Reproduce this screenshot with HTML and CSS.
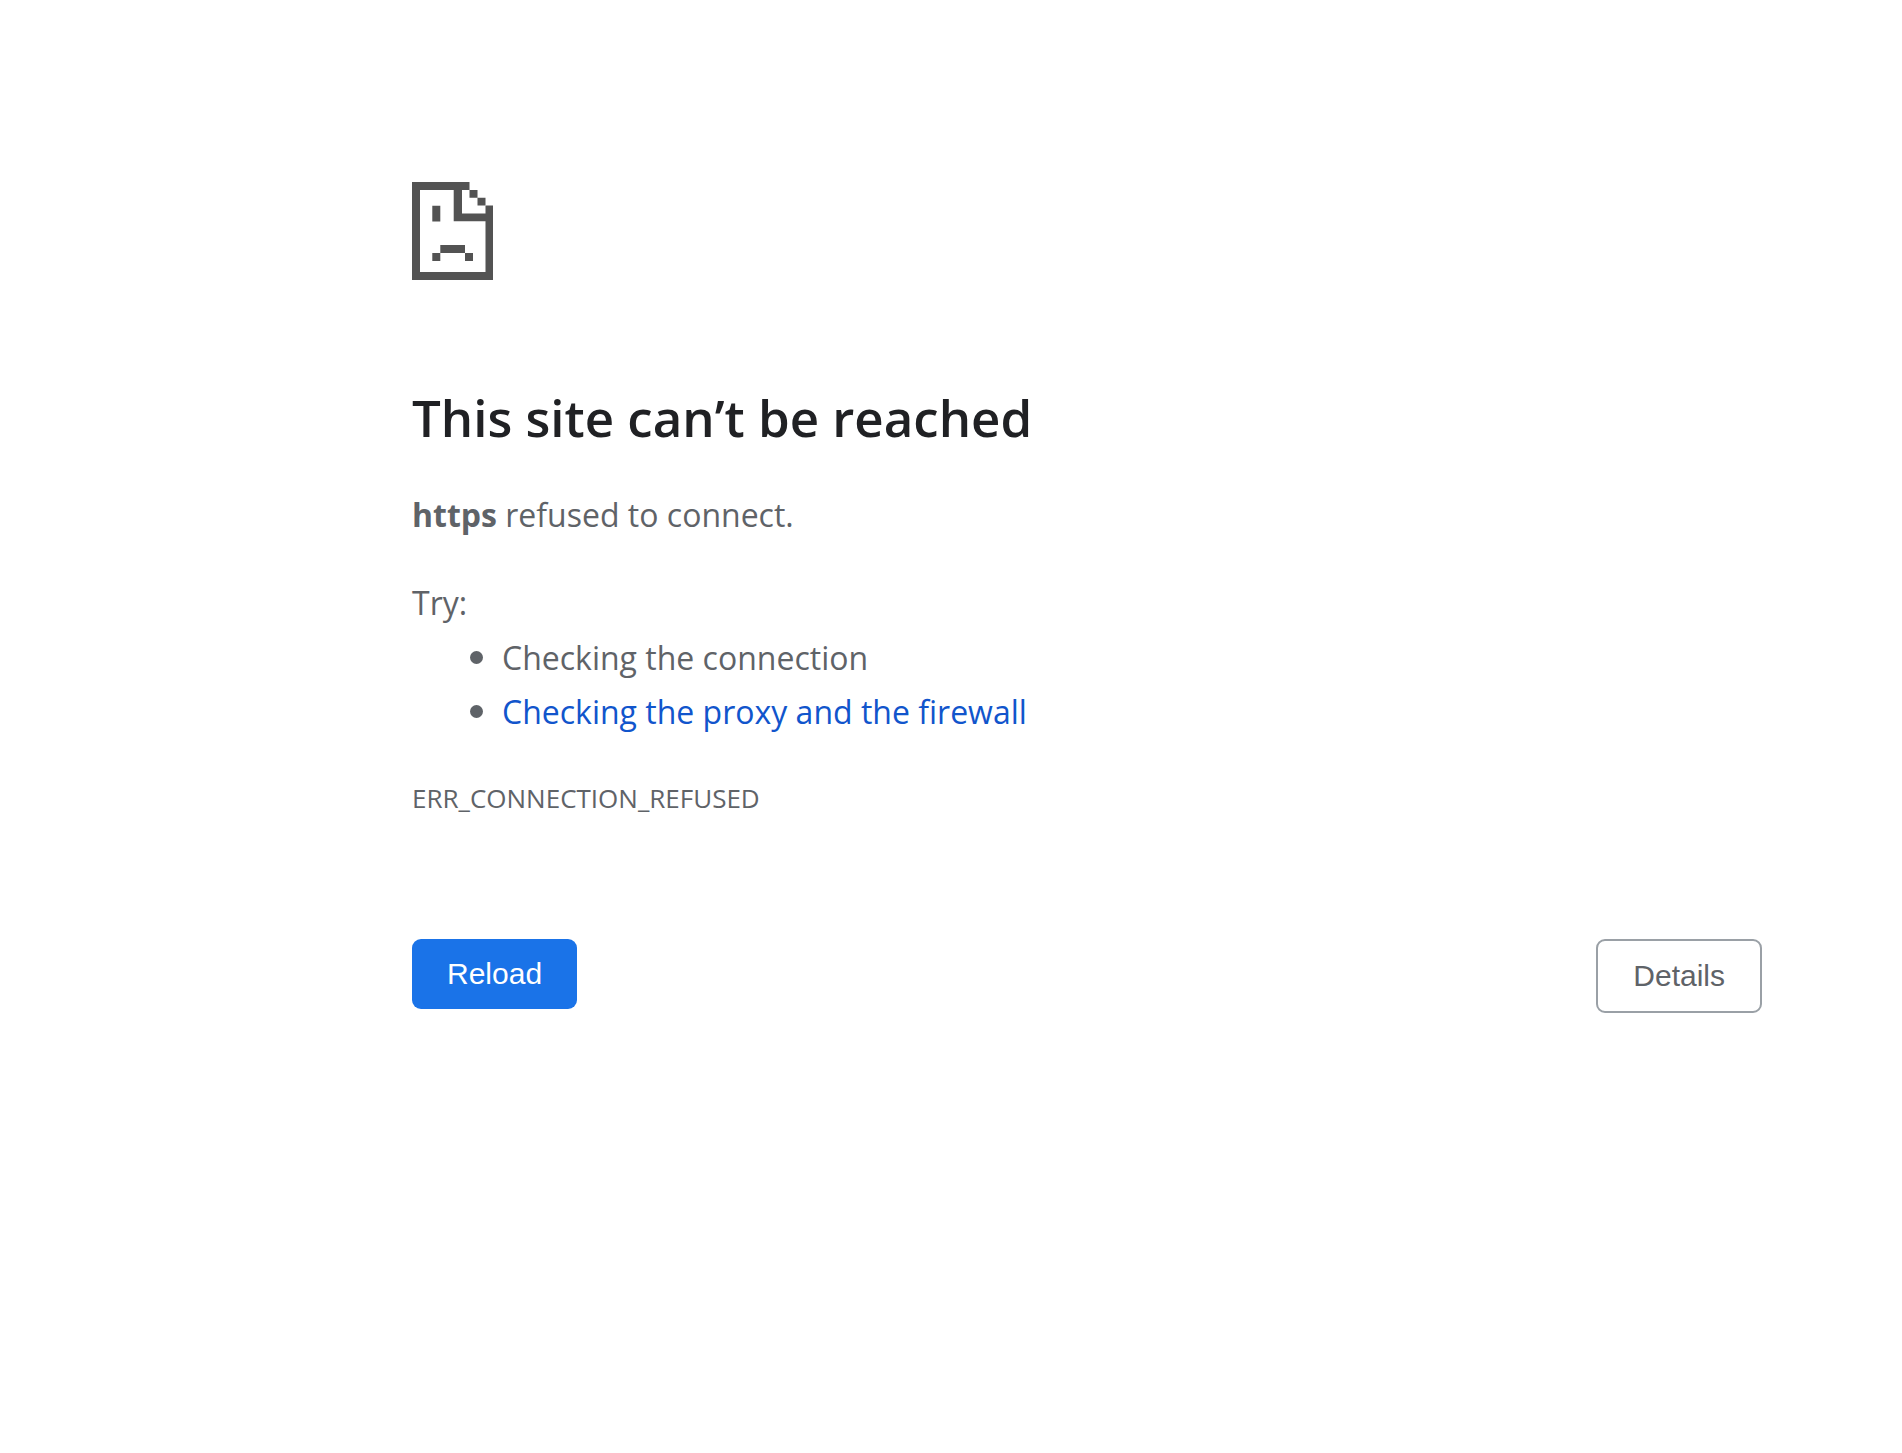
FILE: index.html
```html
<!DOCTYPE html>
<html lang="en">
<head>
    <meta charset="UTF-8">
    <meta name="viewport" content="width=device-width, initial-scale=1.0">
    <title>This site can’t be reached</title>
    <link rel="stylesheet" href="styles.css">
</head>
<body>
    <main class="error-page">
        <svg class="error-icon" viewBox="0 0 81 98" aria-hidden="true">
            <!-- page outline with folded corner -->
            <path fill-rule="evenodd" d="M0 0H57.5V8H50V31.5H73.5V23.5H81V98H0ZM8 8V90H73.5V39.3H41.7V8Z"/>
            <path d="M57.5 8h8v7.8h-8zM65.5 15.8h8v7.8h-8z"/>
            <!-- face -->
            <path d="M20.3 23.7h8v15.7h-8zM28.3 63h24.7v8H28.3zM20.3 71h8v8h-8zM53 71h8v8h-8z"/>
        </svg>

        <h1>This site can’t be reached</h1>
        <p class="summary"><strong>https</strong> refused to connect.</p>

        <div class="suggestions">
            <p>Try:</p>
            <ul>
                <li>Checking the connection</li>
                <li><a href="#buttons">Checking the proxy and the firewall</a></li>
            </ul>
        </div>

        <div class="error-code">ERR_CONNECTION_REFUSED</div>

        <div class="buttons" id="buttons">
            <button type="button" class="reload-btn">Reload</button>
            <button type="button" class="details-btn">Details</button>
        </div>
    </main>
</body>
</html>
```

FILE: styles.css
```css
* {
    margin: 0;
    padding: 0;
    box-sizing: border-box;
}

body {
    background: #fff;
    color: #5f6368;
    font-family: 'Segoe UI', 'Open Sans', 'Noto Sans', sans-serif;
    font-size: 32px;
    line-height: 54px;
}

.error-page {
    padding: 182px 140px 40px 412px;
}

.error-icon {
    display: block;
    width: 81px;
    height: 98px;
    fill: #535353;
}

h1 {
    margin-top: 104px;
    color: #202124;
    font-size: 51px;
    font-weight: 600;
    line-height: 66px;
}

.summary {
    margin-top: 38px;
}

.suggestions {
    margin-top: 34px;
}

.suggestions ul {
    padding-left: 90px;
    line-height: 53px;
}

.suggestions li::marker {
    font-size: 36px;
}

a {
    color: #1155cc;
    text-decoration: none;
}

.error-code {
    margin-top: 33px;
    font-size: 26px;
}

.buttons {
    display: flex;
    justify-content: space-between;
    align-items: flex-start;
    margin-top: 114px;
}

button {
    padding: 18px 35px;
    border: none;
    border-radius: 9px;
    font-family: 'Liberation Sans', Arial, sans-serif;
    font-size: 30px;
    line-height: 34px;
    cursor: pointer;
}

.reload-btn {
    background: #1a73e8;
    color: #fff;
}

.details-btn {
    background: #fff;
    color: #5f6368;
    border: 2px solid #9aa0a6;
}

@media (max-width: 1200px) {
    .error-page {
        padding: 60px 40px;
    }
}
```
